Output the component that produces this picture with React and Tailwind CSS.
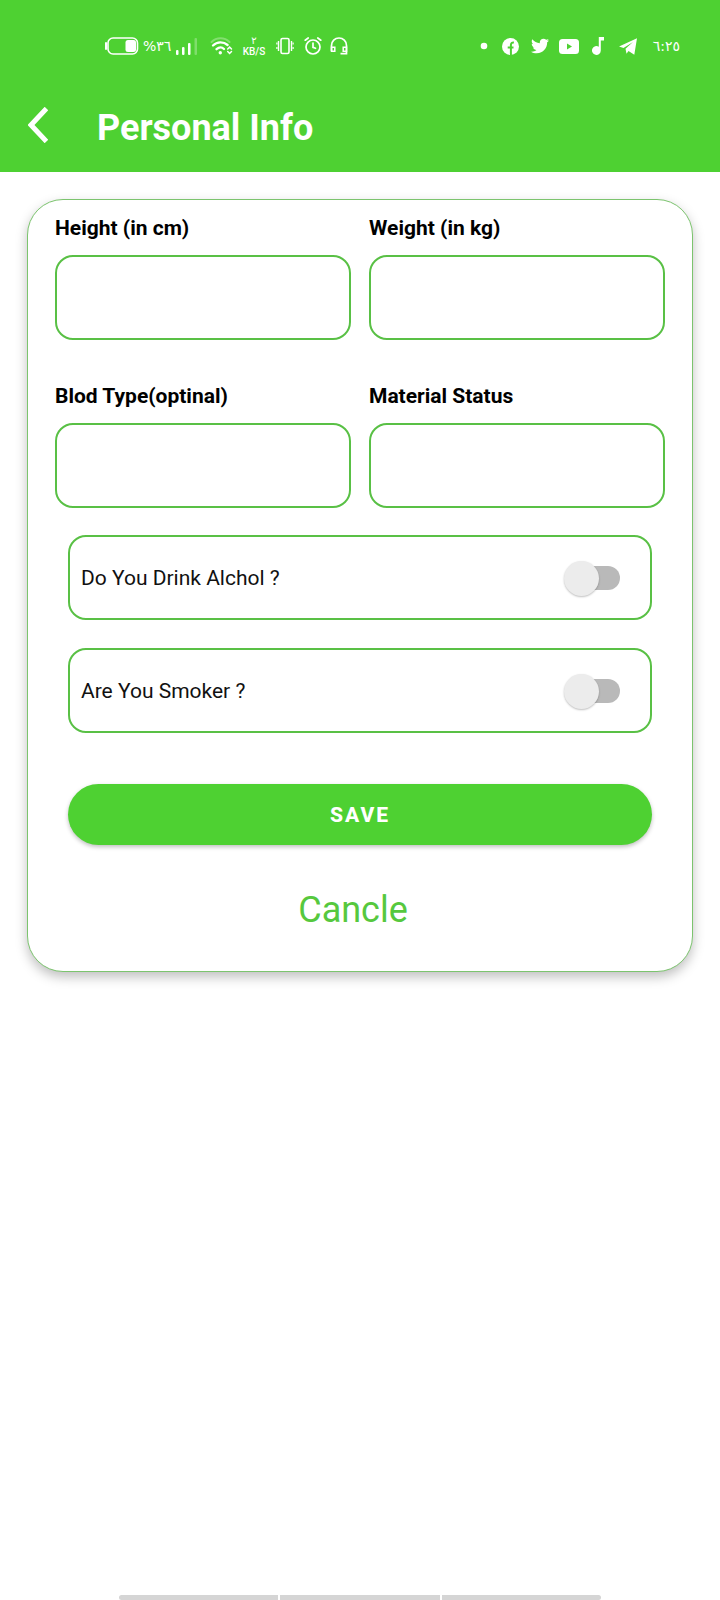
import React from "react";
import { FaTwitter } from "react-icons/fa";

function StatusBar() {
  return (
    <div className="flex h-[92px] items-center justify-between pr-10 pl-[105px]">
      <div className="flex items-center">
        <svg className="h-[18px] w-[34px]" viewBox="0 0 34 18" fill="none">
          <rect x="3" y="1" width="29.5" height="16" rx="5" stroke="#fff" strokeWidth="1.6" />
          <rect x="20.5" y="3" width="10.5" height="12" rx="2.5" fill="#fff" />
          <path d="M1 6v6" stroke="#fff" strokeWidth="2" strokeLinecap="round" />
        </svg>
        <span className="ml-1 w-7 font-['DejaVu_Sans',sans-serif] text-[14px] leading-4">%٣٦</span>
        <svg className="ml-1 h-[18px] w-[23px]" viewBox="0 0 23 18" fill="#fff">
          <rect x="1" y="13" width="2.5" height="5" rx="1" />
          <rect x="7" y="10" width="2.5" height="8" rx="1" />
          <rect x="13" y="6" width="2.5" height="12" rx="1" />
          <rect x="19.5" y="1" width="2.5" height="17" rx="1" opacity=".28" />
        </svg>
        <svg className="ml-3 h-[18px] w-[23px]" viewBox="0 0 23 18" fill="none" stroke="#fff" strokeWidth="2" strokeLinecap="round">
          <path d="M1.5 5C6.5 0 14.500 0 19.500 5" opacity=".3" />
          <path d="M3 8.500C7.200 4.500 13.400 4.500 17.600 8" strokeWidth="2.300" />
          <path d="M6.500 12.200C9 10 12 10 14 12" strokeWidth="2.300" />
          <circle cx="10.300" cy="15.800" r="1.700" fill="#fff" stroke="none" />
          <path d="M17.700 12l1.900-2 1.900 2M17.700 14.500l1.900 2 1.900-2" strokeWidth="1.500" />
        </svg>
        <span className="ml-[9px] flex w-6 flex-col items-center font-['DejaVu_Sans',sans-serif] text-[10px] leading-[11px]">
          <span>٢</span>
          <span className="font-['Roboto',sans-serif] font-medium">KB/S</span>
        </span>
        <svg className="ml-[10px] h-[18px] w-[18px]" viewBox="0 0 18 18" fill="none" stroke="#fff" strokeWidth="1.600">
          <rect x="5" y="1.500" width="8" height="15" rx="1.500" />
          <path d="M2.500 4v10M15.500 4v10" strokeWidth="1.400" />
          <path d="M.9 5.500v2M.9 10v2M17.100 5.500v2M17.100 10v2" strokeWidth="1.200" />
        </svg>
        <svg className="ml-[10px] h-[18px] w-[18px]" viewBox="0 0 18 18" fill="none" stroke="#fff" strokeWidth="1.700" strokeLinecap="round">
          <circle cx="9" cy="10" r="7" />
          <path d="M9 6v4.300l2.500 1M1.200 3.200l3-2.200M16.800 3.200l-3-2.200" />
        </svg>
        <svg className="ml-2 h-[18px] w-[18px]" viewBox="0 0 18 18" fill="none" stroke="#fff" strokeWidth="1.700">
          <path d="M1.500 14V8.500a7.500 7.500 0 0 1 15 0V16.700H10.500" />
          <path d="M1.500 10.300H4.800v3.900H1.500zM16.500 10.300H13.200v3.900h3.300z" strokeWidth="1.500" />
        </svg>
      </div>
      <div className="flex items-center">
        <svg className="h-2 w-2" viewBox="0 0 8 8" fill="#fff">
          <circle cx="4" cy="4" r="3.300" />
        </svg>
        <svg className="ml-[14px] h-[17px] w-[17px]" viewBox="0 0 17 17">
          <circle cx="8.500" cy="8.500" r="8.500" fill="#fff" />
          <path d="M8.900 17V7q0-2.700 3-2.500M5.700 9.500h5.800" fill="none" stroke="#4ed132" strokeWidth="2" />
        </svg>
        <FaTwitter className="ml-3 h-[18px] w-[18px]" />
        <svg className="ml-[10px] h-[15px] w-5" viewBox="0 0 20 15">
          <rect width="20" height="15" rx="3.500" fill="#fff" />
          <path d="M8 4.500v6l5-3z" fill="#4ed132" />
        </svg>
        <svg className="ml-[13px] h-[18px] w-3" viewBox="0 0 12 18" fill="#fff">
          <path d="M6.800 0H12v3.500H8.800V13.500a4.400 4.400 0 1 1-2-3.700z" />
        </svg>
        <svg className="ml-[15px] h-[17px] w-[18px]" viewBox="0 0 18 17" fill="#fff">
          <path d="M18 .3 15.300 16.700 9.500 12.900 7.500 15.700 6.500 10.800 14 4 4.500 9.900 0 8.500z" />
        </svg>
        <span className="ml-4 font-['DejaVu_Sans',sans-serif] text-[14px] leading-4">٦:٢٥</span>
      </div>
    </div>
  );
}

function Field({ id, label }) {
  return (
    <div className="flex min-w-0 flex-1 flex-col gap-[13px]">
      <label htmlFor={id} className="text-[21px] leading-7 font-bold text-black">
        {label}
      </label>
      <input
        id={id}
        type="text"
        className="h-[85px] w-full rounded-[18px] border-2 border-[#59c045] bg-white px-4 text-[21px] outline-none"
      />
    </div>
  );
}

function ToggleRow({ label }) {
  return (
    <label className="flex h-[85px] items-center justify-between rounded-[18px] border-2 border-[#59c045] pr-[30px] pl-[11px] text-[21px] text-[#111]">
      <span className="pt-[3px]">{label}</span>
      <input
        type="checkbox"
        role="switch"
        className="relative h-9 w-14 appearance-none before:absolute before:top-[6px] before:right-0 before:h-6 before:w-12 before:rounded-full before:bg-[#b9b9b9] after:absolute after:top-px after:left-0 after:size-[35px] after:rounded-full after:bg-[#ececec] after:shadow-[0_1px_2px_rgba(0,0,0,0.25)] checked:after:left-[21px]"
      />
    </label>
  );
}

export default function App() {
  return (
    <div className="flex min-h-screen flex-col bg-white font-['Roboto',sans-serif]">
      <header className="bg-[#4ed132] text-white">
        <StatusBar />
        <div className="flex h-20 items-start gap-[49px] pt-[15px] pl-7">
          <button type="button" aria-label="Back">
            <svg className="h-9 w-5" viewBox="0 0 20 36" fill="none" stroke="#fff" strokeWidth="5">
              <path d="M18.500 1.500 3 18l15.500 16.500" />
            </svg>
          </button>
          <h1 className="text-[36px] leading-[42px] font-bold">Personal Info</h1>
        </div>
      </header>

      <main className="px-[27px] pt-[27px] pb-8">
        <form className="rounded-[36px] border border-[#7cc46e] bg-white px-[27px] pt-[14px] pb-[37px] shadow-[0_5px_12px_rgba(0,0,0,0.25)]">
          <div className="flex gap-[18px]">
            <Field id="height" label="Height (in cm)" />
            <Field id="weight" label="Weight (in kg)" />
          </div>
          <div className="mt-[42px] flex gap-[18px]">
            <Field id="blood" label="Blod Type(optinal)" />
            <Field id="status" label="Material Status" />
          </div>
          <div className="mt-[27px] flex flex-col gap-7 px-[13px]">
            <ToggleRow label="Do You Drink Alchol ?" />
            <ToggleRow label="Are You Smoker ?" />
          </div>
          <div className="mt-[51px] flex flex-col px-[13px]">
            <button
              type="button"
              className="h-[61px] rounded-full bg-[#4ed132] pt-[2px] text-[21px] font-extrabold tracking-[2px] text-white shadow-[0_2px_4px_rgba(0,0,0,0.25)]"
            >
              SAVE
            </button>
            <button type="button" className="mt-[41px] mr-[14px] self-center text-[36px] leading-[48px] text-[#56c83e]">
              Cancle
            </button>
          </div>
        </form>
      </main>

      <div className="mx-auto mt-auto flex h-[5px] w-[67%] gap-[2px]">
        <span className="flex-1 rounded-l-full bg-[#d5d5d5]" />
        <span className="flex-1 bg-[#d5d5d5]" />
        <span className="flex-1 rounded-r-full bg-[#d5d5d5]" />
      </div>
    </div>
  );
}
